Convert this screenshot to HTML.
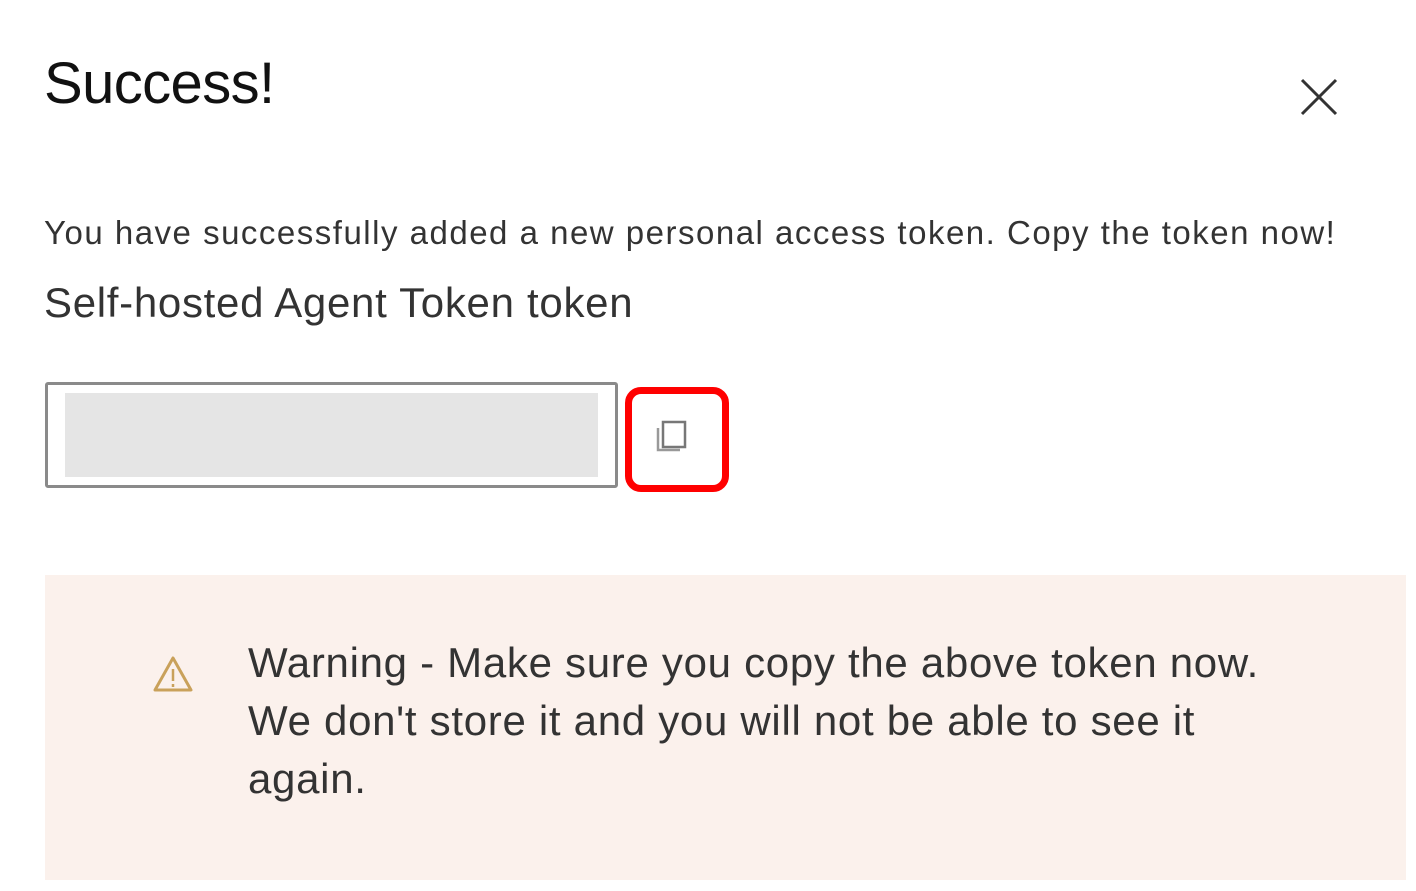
<!DOCTYPE html>
<html><head><style>
body{margin:0;width:1416px;height:891px;background:#fff;font-family:"Liberation Sans",sans-serif;position:relative;overflow:hidden;color:#222}
.a{position:absolute;white-space:nowrap}
</style></head><body>
<div class="a" style="left:44px;top:50px;font-size:58px;color:#111;letter-spacing:-0.6px">Success!</div>
<svg class="a" style="left:1300px;top:78px" width="38" height="38"><path d="M2 2L36 36M36 2L2 36" stroke="#333" stroke-width="3"/></svg>
<div class="a" style="left:44px;top:214px;font-size:33px;color:#333;letter-spacing:1.5px">You have successfully added a new personal access token. Copy the token now!</div>
<div class="a" style="left:44px;top:279px;font-size:42px;color:#333;letter-spacing:0.7px">Self-hosted Agent Token token</div>
<div class="a" style="left:45px;top:382px;width:567px;height:100px;border:3px solid #8a8a8a;border-radius:3px"></div>
<div class="a" style="left:65px;top:393px;width:533px;height:84px;background:#e5e5e5"></div>
<div class="a" style="left:625px;top:387px;width:90px;height:91px;border:7px solid #f00;border-radius:16px"></div>
<svg class="a" style="left:654px;top:418px" width="36" height="36"><rect x="9" y="4" width="22" height="25" fill="none" stroke="#777" stroke-width="2.5"/><path d="M4 10V32H26" fill="none" stroke="#999" stroke-width="2.5"/></svg>
<div class="a" style="left:45px;top:575px;width:1361px;height:305px;background:#fbf1ec"></div>
<svg class="a" style="left:152px;top:655px" width="42" height="38"><path d="M21 3L39 35H3Z" fill="none" stroke="#c9a15a" stroke-width="3" stroke-linejoin="round"/><path d="M21 14V26M21 29V32" stroke="#c9a15a" stroke-width="2.5"/></svg>
<div class="a" style="left:248px;top:634px;font-size:42px;line-height:58px;color:#333;letter-spacing:0.7px;white-space:normal;width:1150px">Warning - Make sure you copy the above token now.<br>We don't store it and you will not be able to see it<br>again.</div>
</body></html>
